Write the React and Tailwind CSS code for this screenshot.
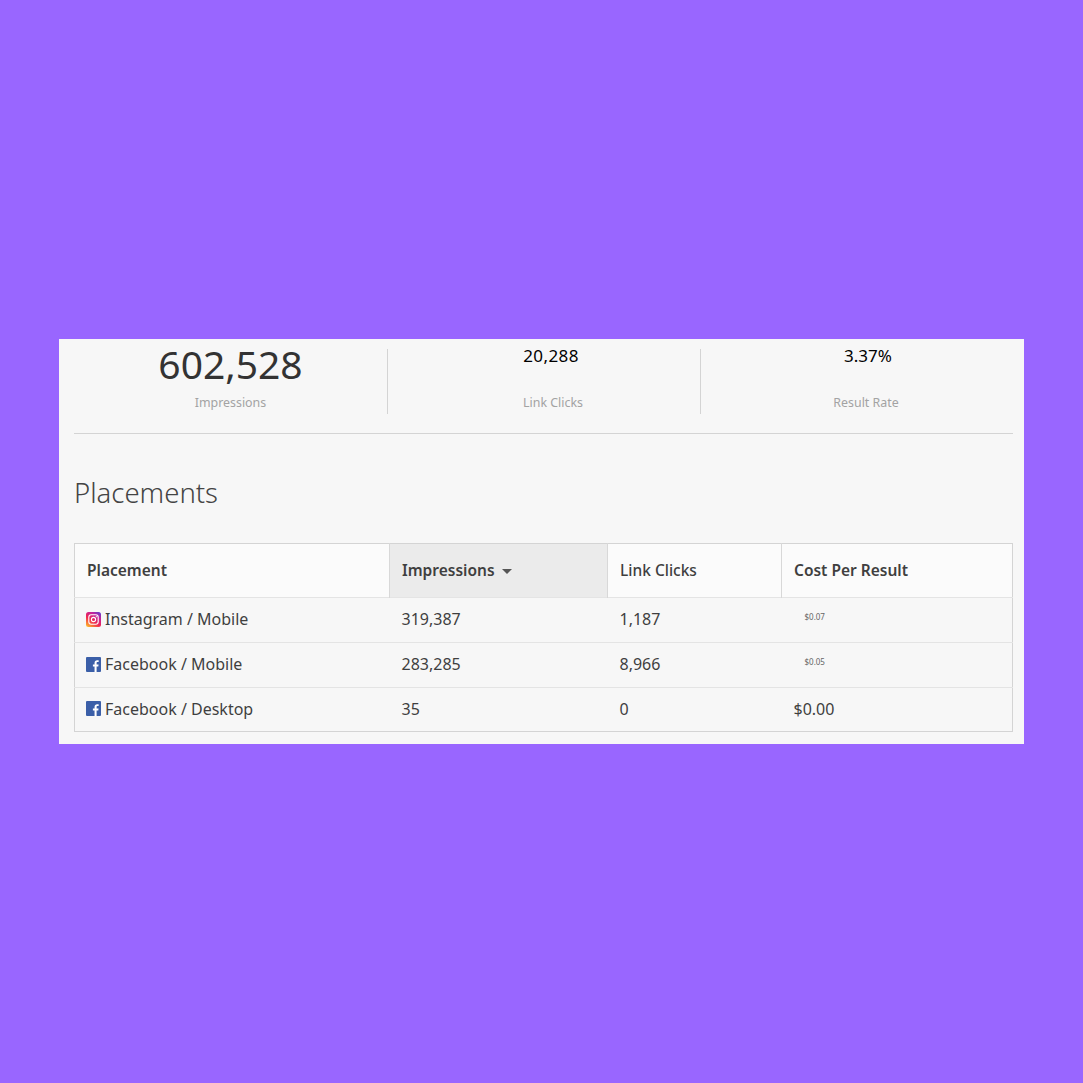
import React from 'react';

const stats = [
  { value: '602,528', label: 'Impressions', big: true },
  { value: '20,288', label: 'Link Clicks', valueClass: 'pr-[4px] tracking-[0.4px]' },
  { value: '3.37%', label: 'Result Rate', valueClass: 'pl-[4px]' },
];

const rows = [
  { icon: 'ig', name: 'Instagram / Mobile', impressions: '319,387', clicks: '1,187', cost: '$0.07', small: true },
  { icon: 'fb', name: 'Facebook / Mobile', impressions: '283,285', clicks: '8,966', cost: '$0.05', small: true },
  { icon: 'fb', name: 'Facebook / Desktop', impressions: '35', clicks: '0', cost: '$0.00', last: true },
];

const InstagramIcon = () => (
  <svg width="15" height="15" viewBox="0 0 15 15" className="shrink-0">
    <defs>
      <linearGradient id="ig" x1="0.15" y1="1" x2="0.85" y2="0">
        <stop offset="0" stopColor="#fdb32b" />
        <stop offset="0.4" stopColor="#f0264f" />
        <stop offset="0.75" stopColor="#c4229b" />
        <stop offset="1" stopColor="#6a3cc8" />
      </linearGradient>
    </defs>
    <rect width="15" height="15" rx="2.5" fill="url(#ig)" />
    <rect x="2.8" y="2.8" width="9.4" height="9.4" rx="2.4" fill="none" stroke="#fff" strokeWidth="1.1" />
    <circle cx="7.5" cy="7.5" r="2.1" fill="none" stroke="#fff" strokeWidth="1.1" />
    <circle cx="10.3" cy="4.7" r="0.6" fill="#fff" />
  </svg>
);

const FacebookIcon = () => (
  <svg width="15" height="15" viewBox="0 0 15 15" className="shrink-0">
    <rect width="15" height="15" rx="1" fill="#3b5fa8" />
    <path d="M10.6 15V9.4h1.7l.25-2h-1.95V6.1c0-.6.2-1 1-1h1.05V3.3c-.2 0-.8-.1-1.5-.1-1.55 0-2.6.95-2.6 2.7v1.5H6.9v2h1.65V15z" fill="#fff" />
  </svg>
);

const App = () => {
  return (
    <div className="flex h-[1083px] items-center justify-center bg-[#9966ff] font-['Noto_Sans','Liberation_Sans',sans-serif] text-[#3f3f3f]">
      <div className="h-[405px] w-[965px] bg-[#f7f7f7] pl-[15px] pr-[11px] pt-[10px]">
        {/* Stats */}
        <div className="flex h-[85px] border-b border-[#d4d4d4]">
          {stats.map((stat, i) => (
            <div
              key={stat.label}
              className={`h-[65px] text-center ${i === 0 ? 'w-[313px]' : i === 1 ? 'w-[313px] border-l border-[#d4d4d4] pl-[18px]' : 'flex-1 border-l border-[#d4d4d4] pl-[18px]'}`}
            >
              {stat.big ? (
                <div className="mt-[-6px] h-[41px] text-[39px] leading-[41px] text-[#333]">{stat.value}</div>
              ) : (
                <div className={`mt-[-4px] h-[39px] text-[17px] leading-[22px] text-black ${stat.valueClass}`}>{stat.value}</div>
              )}
              <div className="mt-[11px] text-[12.4px] leading-[16px] text-[#a3a3a3]">{stat.label}</div>
            </div>
          ))}
        </div>

        <h2 className="mt-[41px] text-[27.5px] font-light leading-[36px] text-[#444]">Placements</h2>

        {/* Table */}
        <table className="mt-[32px] w-[939px] table-fixed border-collapse border border-[#d4d4d4] text-[16px]">
          <colgroup>
            <col className="w-[315px]" />
            <col className="w-[218px]" />
            <col className="w-[174px]" />
            <col />
          </colgroup>
          <thead>
            <tr className="h-[54px] bg-[#fbfbfb] text-left text-[15.5px]">
              <th className="pl-[12px] font-semibold">Placement</th>
              <th className="border-x border-[#d8d8d8] bg-[#ebebeb] pl-[12px] font-semibold">
                <span className="inline-flex items-center gap-[7px]">
                  Impressions
                  <span className="mt-[1px] h-0 w-0 border-x-[5px] border-t-[5px] border-x-transparent border-t-[#555]" />
                </span>
              </th>
              <th className="pl-[12px] font-medium">Link Clicks</th>
              <th className="border-l border-[#d8d8d8] pl-[12px] font-semibold">Cost Per Result</th>
            </tr>
          </thead>
          <tbody>
            {rows.map((row) => (
              <tr key={row.name} className={`border-t border-[#e4e4e4] ${row.last ? 'h-[44px]' : 'h-[45px]'}`}>
                <td className="pb-[2px] pl-[11px]">
                  <span className="flex items-center gap-[4px]">
                    {row.icon === 'ig' ? <InstagramIcon /> : <FacebookIcon />}
                    {row.name}
                  </span>
                </td>
                <td className="pb-[2px] pl-[12px]">{row.impressions}</td>
                <td className="pb-[2px] pl-[12px]">{row.clicks}</td>
                <td className="pb-[2px] pl-[12px]">
                  {row.small ? (
                    <span className="relative top-[-2px] block pl-[11px] text-[8px] leading-[10px] text-[#666]">{row.cost}</span>
                  ) : (
                    row.cost
                  )}
                </td>
              </tr>
            ))}
          </tbody>
        </table>
      </div>
    </div>
  );
};

export default App;
